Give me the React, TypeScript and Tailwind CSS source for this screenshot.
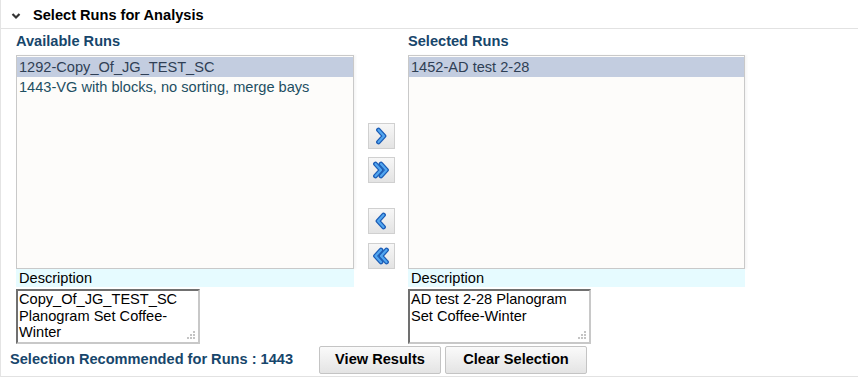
import React from "react";

const available = ["1292-Copy_Of_JG_TEST_SC", "1443-VG with blocks, no sorting, merge bays"];
const selected = ["1452-AD test 2-28"];

function Arrow({ dir, double }: { dir: "right" | "left"; double?: boolean }) {
  const flip = dir === "left" ? "scale(-1,1) translate(-18,0)" : undefined;
  return (
    <button className="w-[27px] h-[26px] flex items-center justify-center border border-[#d0d0d0] bg-gradient-to-b from-[#f7f7f7] to-[#e3e3e3]">
      <svg width="18" height="18" viewBox="0 0 18 18">
        <g transform={flip}>
          {(double ? [3.5, 9] : [6.5]).map((x) => (
            <g key={x}>
              <path d={`M${x} 3l5.5 6-5.5 6`} fill="none" stroke="#1c5cb5" strokeWidth="4.8" strokeLinecap="round" strokeLinejoin="round" />
              <path d={`M${x} 3l5.5 6-5.5 6`} fill="none" stroke="#52a6f0" strokeWidth="2.2" strokeLinecap="round" strokeLinejoin="round" />
            </g>
          ))}
        </g>
      </svg>
    </button>
  );
}

function Grip() {
  return (
    <svg className="absolute right-[2px] bottom-[2px]" width="10" height="10" viewBox="0 0 10 10">
      {[[8, 2], [5, 5], [8, 5], [2, 8], [5, 8], [8, 8]].map(([x, y], i) => (
        <rect key={i} x={x - 1} y={y - 1} width="2" height="2" fill="#c4c4c4" />
      ))}
    </svg>
  );
}

function RunList({ title, items, desc, descWidth }: { title: string; items: string[]; desc: string; descWidth: string }) {
  return (
    <div className="flex flex-col">
      <div className="h-[26px] pt-[4px] text-[14.6px] leading-[16px] font-bold text-[#17466b]">{title}</div>
      <div className="h-[214px] border border-[#c9c9c9] bg-[#fdfcfa] pt-[1px] shadow-[2px_0_2px_rgba(0,0,0,0.04)]">
        {items.map((it, i) => (
          <div
            key={it}
            className={`h-[20px] pl-[2px] text-[14.6px] leading-[20px] ${i === 0 ? "bg-[#c3cde0] text-[#2f3f55]" : "text-[#1d4f62]"}`}
          >
            {it}
          </div>
        ))}
      </div>
      <div className="h-[18px] bg-[#e6fbff] pl-[3px] text-[14.6px] leading-[18px] text-black">Description</div>
      <div className={`relative mt-[2px] h-[55px] ${descWidth} border-2 border-t-[#707070] border-l-[#707070] border-r-[#c8c8c8] border-b-[#c8c8c8] bg-white pl-[1px] text-[14.6px] leading-[16.5px] text-black`}>
        {desc}
        <Grip />
      </div>
    </div>
  );
}

export default function App() {
  return (
    <div className="w-[865px] h-[380px] bg-white font-['Liberation_Sans',Arial,sans-serif] relative">
      <div className="w-[858px] border-l border-[#e4e4e4]">
        <div className="h-[29px] flex items-center border-b border-[#e2e2e2] pl-[10px] pt-[3px]">
          <svg width="10" height="8" viewBox="0 0 10 8" className="mr-[12px]">
            <path d="M1.5 2l3.5 3.5L8.5 2" fill="none" stroke="#333" strokeWidth="2.2" />
          </svg>
          <span className="text-[14.6px] font-bold text-black">Select Runs for Analysis</span>
        </div>

        <div className="flex pl-[15px]">
          <div className="w-[338px]">
            <RunList
              title="Available Runs"
              items={available}
              desc="Copy_Of_JG_TEST_SC Planogram Set Coffee-Winter"
              descWidth="w-[184px]"
            />
          </div>
          <div className="w-[54px] flex flex-col items-center pt-[94px]">
            <Arrow dir="right" />
            <div className="h-[8px]" />
            <Arrow dir="right" double />
            <div className="h-[25px]" />
            <Arrow dir="left" />
            <div className="h-[9px]" />
            <Arrow dir="left" double />
          </div>
          <div className="w-[337px]">
            <RunList
              title="Selected Runs"
              items={selected}
              desc="AD test 2-28 Planogram Set Coffee-Winter"
              descWidth="w-[183px]"
            />
          </div>
        </div>

        <div className="flex items-center h-[33px] pl-[9px] border-b border-[#e2e2e2]">
          <span className="w-[309px] text-[14.6px] font-bold text-[#17466b]">Selection Recommended for Runs : 1443</span>
          <button className="w-[122px] h-[28px] border border-[#c4c4c4] rounded-[2px] bg-gradient-to-b from-[#fafafa] to-[#e4e4e4] text-[14.6px] font-bold text-black">
            View Results
          </button>
          <button className="ml-[4px] w-[142px] h-[28px] border border-[#c4c4c4] rounded-[2px] bg-gradient-to-b from-[#fafafa] to-[#e4e4e4] text-[14.6px] font-bold text-black">
            Clear Selection
          </button>
        </div>
      </div>
    </div>
  );
}
